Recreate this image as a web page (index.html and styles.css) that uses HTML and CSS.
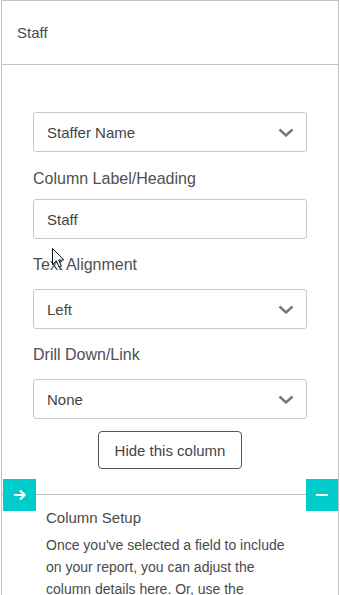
FILE: index.html
```html
<!DOCTYPE html>
<html lang="en">
<head>
  <meta charset="UTF-8" />
  <meta name="viewport" content="width=device-width, initial-scale=1.0"/>
  <title>Column Settings</title>
  <link rel="stylesheet" href="styles.css">
</head>
<body>
  <div class="panel">
    <div class="panel-header">Staff</div>

    <div class="column-form">
      <div class="select-box">
        <span>Staffer Name</span>
        <svg class="chevron" width="16" height="9" viewBox="0 0 16 9"><path d="M1.5 1.5 L8 7.5 L14.5 1.5" fill="none" stroke="#777" stroke-width="2.4"/></svg>
      </div>

      <div class="field-label label-tight">Column Label/Heading</div>
      <div class="text-box">Staff</div>

      <div class="field-label">Text Alignment</div>
      <div class="select-box">
        <span>Left</span>
        <svg class="chevron" width="16" height="9" viewBox="0 0 16 9"><path d="M1.5 1.5 L8 7.5 L14.5 1.5" fill="none" stroke="#777" stroke-width="2.4"/></svg>
      </div>

      <div class="field-label">Drill Down/Link</div>
      <div class="select-box">
        <span>None</span>
        <svg class="chevron" width="16" height="9" viewBox="0 0 16 9"><path d="M1.5 1.5 L8 7.5 L14.5 1.5" fill="none" stroke="#777" stroke-width="2.4"/></svg>
      </div>

      <div class="form-actions">
        <button class="hide-btn">Hide this column</button>
      </div>
    </div>

    <div class="divider">
      <span class="divider-btn divider-left">
        <svg width="14" height="12" viewBox="0 0 14 12"><path d="M1 6 H12 M7 1.5 L11.8 6 L7 10.5" fill="none" stroke="#fff" stroke-width="2"/></svg>
      </span>
      <span class="divider-btn divider-right">
        <svg width="12" height="2" viewBox="0 0 12 2"><rect x="0" y="0" width="12" height="2" fill="#fff"/></svg>
      </span>
    </div>

    <div class="help">
      <h3>Column Setup</h3>
      <p>Once you've selected a field to include on your report, you can adjust the column details here. Or, use the buttons below to move between columns.</p>
    </div>
  </div>

  <!-- mouse pointer from the screenshot -->
  <svg class="pointer" width="14" height="21" viewBox="0 0 14 21">
    <path d="M0.5 0.5 V16.5 L4.3 12.8 L7 19 L9.3 18 L6.7 12 H11.8 Z" fill="#fff" stroke="#111" stroke-width="1" stroke-linejoin="miter"/>
  </svg>
</body>
</html>
```

FILE: styles.css
```css
body {
  margin: 0;
  font-family: 'Liberation Sans', Arial, sans-serif;
  color: #4a4a4a;
  background: #fff;
  overflow: hidden;
}

.panel {
  width: 338px;
  height: 620px;
  margin-left: 1px;
  box-sizing: border-box;
  border: 1px solid #c4c4c4;
}

.panel-header {
  height: 63px;
  display: flex;
  align-items: center;
  padding-left: 15px;
  font-size: 15px;
  border-bottom: 1px solid #c4c4c4;
}

.column-form {
  padding: 47px 31px 0;
}

.select-box, .text-box {
  height: 40px;
  box-sizing: border-box;
  border: 1px solid #c8c8c8;
  border-radius: 3px;
  display: flex;
  align-items: center;
  justify-content: space-between;
  padding: 0 12px 0 13px;
  font-size: 15px;
  color: #444;
}

.chevron {
  display: block;
}

.field-label {
  font-size: 16px;
  line-height: 20px;
  margin: 16px 0 14px;
  color: #505050;
}

.label-tight {
  margin: 17px 0 10px;
}

.form-actions {
  display: flex;
  justify-content: center;
  margin-top: 12px;
}

.hide-btn {
  width: 144px;
  height: 38px;
  font-family: inherit;
  font-size: 15px;
  color: #444;
  background: #fff;
  border: 1px solid #555;
  border-radius: 4px;
  padding: 0;
}

.divider {
  position: relative;
  height: 1px;
  background: #bdbdbd;
  margin-top: 25px;
}

.divider-btn {
  position: absolute;
  top: -15px;
  width: 32px;
  height: 32px;
  background: #00cccc;
  display: flex;
  align-items: center;
  justify-content: center;
}

.divider-left {
  left: 1px;
  width: 33px;
}

.divider-right {
  right: 0;
}

.help {
  padding: 0 50px 0 44px;
}

.help h3 {
  margin: 13px 0 6px;
  font-size: 15px;
  line-height: 20px;
  font-weight: normal;
  color: #4a4a4a;
}

.help p {
  margin: 0;
  font-size: 14px;
  line-height: 22px;
  color: #4a4a4a;
}

.pointer {
  position: absolute;
  left: 52px;
  top: 248px;
}
```
